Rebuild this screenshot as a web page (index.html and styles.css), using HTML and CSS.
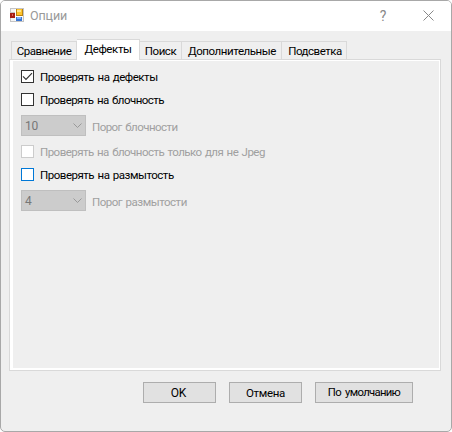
FILE: index.html
```html
<!DOCTYPE html>
<html lang="ru">
<head>
<meta charset="utf-8">
<title>Опции</title>
<link rel="stylesheet" href="styles.css">
</head>
<body>
<div class="window">
  <header class="titlebar">
    <svg class="app-icon" width="14" height="14" viewBox="0 0 14 14" shape-rendering="crispEdges">
      <path fill="#c4c4c4" d="M0 0h14v14H0z"/>
      <path fill="#f4f4f4" d="M1 1h4v3H1zM1 10h4v3H1zM12 9h1v4h-1z"/>
      <path fill="#b98313" d="M6 1h7v7H6z"/>
      <path fill="#ffc42c" d="M7 1h5v6H7z"/>
      <path fill="#ffe58c" d="M7 2h4v2H7z"/>
      <path fill="#a51d14" d="M0 5h5v5H0z"/>
      <path fill="#e5695b" d="M2 6h1v2H2z"/>
      <path fill="#fff" d="M5 1h1v12H5zM6 8h7v1H6z"/>
      <path fill="#3b76d2" d="M6 9h6v4H6z"/>
      <path fill="#7eb2ff" d="M7 9h4v2H7z"/>
    </svg>
    <h1 class="title">Опции</h1>
    <span class="help">?</span>
    <svg class="close" width="11" height="11" viewBox="0 0 11 11"><path d="M.5.5l10 10M10.500.5l-10 10" stroke="#888" fill="none"/></svg>
  </header>
  <main class="content">
    <nav class="tabs">
      <span class="tab t-compare">Сравнение</span>
      <span class="tab t-defects active">Дефекты</span>
      <span class="tab t-search">Поиск</span>
      <span class="tab t-extra">Дополнительные</span>
      <span class="tab t-light">Подсветка</span>
    </nav>
    <section class="panel">
      <div class="check"><span class="box"><svg width="11" height="11" viewBox="0 0 11 11"><path d="M1 5.300l3 3L10 2.200" stroke="#333" stroke-width="1.200" fill="none"/></svg></span><span class="w-defects">Проверять на дефекты</span></div>
      <div class="check second"><span class="box"></span><span class="w-block">Проверять на блочность</span></div>
      <div class="field"><span class="combo">10<svg width="9" height="5" viewBox="0 0 9 5"><path d="M.5.500l4 4 4-4" stroke="#999" fill="none"/></svg></span><span class="w-tblock">Порог блочности</span></div>
      <div class="check disabled"><span class="box"></span><span class="w-jpeg">Проверять на блочность только для не Jpeg</span></div>
      <div class="check focus"><span class="box"></span><span class="w-blur">Проверять на размытость</span></div>
      <div class="field last"><span class="combo">4<svg width="9" height="5" viewBox="0 0 9 5"><path d="M.5.500l4 4 4-4" stroke="#999" fill="none"/></svg></span><span class="w-tblur">Порог размытости</span></div>
    </section>
    <footer class="actions">
      <button class="btn ok">OK</button>
      <button class="btn">Отмена</button>
      <button class="btn wide">По умолчанию</button>
    </footer>
  </main>
</div>
</body>
</html>
```
FILE: styles.css
```css
* { box-sizing: border-box; }
body { margin: 0; background: #fff; font: 11.5px/14px Roboto, "Liberation Sans", sans-serif; letter-spacing: -.48px; word-spacing: 1px; color: #000; }
.window { width: 452px; height: 432px; border: 1px solid #a8a8a8; border-radius: 5px; background: #efefef; overflow: hidden; }
.titlebar { height: 30px; background: #fff; display: flex; align-items: center; padding: 0 17px 0 9px; color: #999; }
.app-icon { margin-top: -2px; }
.title { margin: 0 auto 0 6px; font-size: 12.5px; font-weight: 400; letter-spacing: -.1px; }
.help { font-size: 14px; color: #888; margin-right: 37px; }
.close { margin-top: -2px; }
.content { padding: 8px 10px 0 8px; }
.tabs { display: flex; align-items: flex-end; height: 20px; padding-left: 2px; }
.tab { height: 18px; border: 1px solid #d9d9d9; border-width: 1px 1px 0 0; text-align: center; line-height: 19px; white-space: nowrap; }
.tab.active { height: 21px; margin-bottom: -1px; background: #fff; line-height: 19px; position: relative; }
.t-compare { width: 66px; border-left-width: 1px; }
.t-defects { width: 63px; letter-spacing: -.38px; }
.t-search { width: 42px; letter-spacing: -.45px; }
.t-extra { width: 100px; padding-left: 1px; letter-spacing: -.43px; }
.t-light { width: 65px; padding-left: 2px; }
.panel { width: 432px; height: 312px; border: 1px solid #d9d9d9; box-shadow: inset 3px 0 #fff, inset 0 1px #fff, inset -1px 0 #fff, inset 0 -2px #fff; padding: 10px 11px 0; white-space: nowrap; }
.check { display: flex; align-items: center; gap: 6px; height: 13px; }
.w-block, .w-tblock { letter-spacing: -.54px; }
.w-jpeg { letter-spacing: -.53px; }
.second { margin-top: 10px; }
.box { width: 13px; height: 13px; border: 1px solid #333; background: #fff; flex: none; }
.box svg { display: block; }
.disabled { color: #a0a0a0; margin-top: 9px; }
.disabled .box { border-color: #ccc; }
.focus { margin-top: 10px; }
.focus .box { border-color: #0078d7; }
.field { display: flex; align-items: center; gap: 6px; margin-top: 9px; color: #a0a0a0; height: 21px; }
.field > span:last-child { padding-top: 3px; }
.combo { width: 65px; height: 21px; border: 1px solid #bfbfbf; background: #ccc; color: #777; display: flex; align-items: center; justify-content: space-between; padding: 0 3px; font-size: 12px; letter-spacing: -.3px; }
.actions { display: flex; gap: 13px; padding: 11px 0 0 134px; }
.btn { width: 73px; height: 21px; border: 1px solid #adadad; background: #e1e1e1; padding: 0; font: inherit; letter-spacing: -.35px; word-spacing: 2px; color: #000; white-space: nowrap; }
.btn.ok { font-size: 12px; letter-spacing: -.2px; padding-right: 2px; }
.btn.wide { width: 98px; font-size: 11.3px; letter-spacing: -.68px; }
```
